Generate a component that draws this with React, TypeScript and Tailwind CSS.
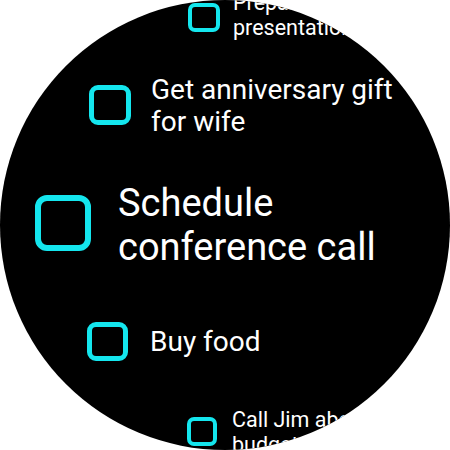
const todos = [
  {
    lines: ['Prepare', 'presentation'],
    row: '-mt-[10px] ml-[188px] gap-[13px]',
    box: 'w-[32px] h-[29px] border-[4px] rounded-[7px] mt-[5px]',
    text: 'text-[21.5px] leading-[25px]',
  },
  {
    lines: ['Get anniversary gift', 'for wife'],
    row: 'mt-[34px] ml-[89px] gap-[20px]',
    box: 'w-[42px] h-[40px] border-[5px] rounded-[9px] mb-[2px]',
    text: 'text-[28px] leading-[32px]',
  },
  {
    lines: ['Schedule', 'conference call'],
    row: 'mt-[43px] ml-[35px] gap-[27px]',
    box: 'w-[56px] h-[56px] border-[6px] rounded-[12px] mb-[4px]',
    text: 'text-[38px] leading-[44px]',
  },
  {
    lines: ['Buy food'],
    row: 'mt-[53px] ml-[87px] gap-[22px]',
    box: 'w-[41px] h-[39px] border-[5px] rounded-[9px] mb-[1px]',
    text: 'text-[28px] leading-[32px]',
  },
  {
    lines: ['Call Jim about', 'budget'],
    row: 'mt-[45px] ml-[187px] gap-[15px]',
    box: 'w-[30px] h-[29px] border-[4px] rounded-[7px] mb-[2px]',
    text: 'text-[21.5px] leading-[25px]',
  },
];

export default function App() {
  return (
    <div className="w-[450px] h-[450px] bg-white">
      <div className="w-[450px] h-[450px] rounded-full bg-black overflow-hidden font-['Roboto',sans-serif] text-white">
        <div className="flex flex-col">
          {todos.map((t) => (
            <div key={t.lines[0]} className={`flex items-center shrink-0 ${t.row}`}>
              <div className={`shrink-0 border-[#14e6ee] ${t.box}`} />
              <div className={`whitespace-nowrap ${t.text}`}>
                {t.lines.map((l) => (
                  <div key={l}>{l}</div>
                ))}
              </div>
            </div>
          ))}
        </div>
      </div>
    </div>
  );
}
